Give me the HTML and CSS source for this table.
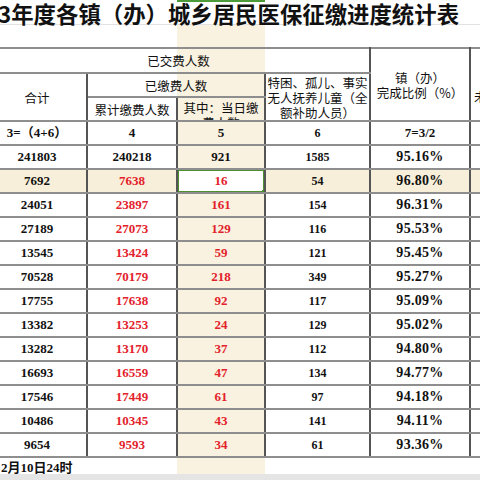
FILE: index.html
```html
<!DOCTYPE html>
<html lang="zh-CN">
<head>
  <meta charset="UTF-8">
  <title>城乡居民医保征缴进度统计表</title>
  <link rel="stylesheet" href="styles.css">
</head>
<body>

<div class="title">3年度各镇（办）城乡居民医保征缴进度统计表</div>

<div class="sheet">
  <table class="grid">
    <colgroup>
      <col class="c-total">
      <col class="c-paid">
      <col class="c-today">
      <col class="c-special">
      <col class="c-rate">
      <col class="c-rest">
    </colgroup>
    <thead>
      <tr class="h1">
        <th colspan="4">已交费人数</th>
        <th rowspan="3" class="rate-head">镇（办）<br>完成比例（%）</th>
        <th rowspan="3" class="cut-head">未缴费人数</th>
      </tr>
      <tr class="h2">
        <th rowspan="2">合计</th>
        <th colspan="2">已缴费人数</th>
        <th rowspan="2" class="special-head">特困、孤儿、事实无人抚养儿童（全额补助人员）</th>
      </tr>
      <tr class="h3">
        <th>累计缴费人数</th>
        <th><div class="clip">其中：当日缴费人数</div></th>
      </tr>
    </thead>
    <tbody>
      <tr class="idx">
        <td>3=（4+6）</td><td>4</td><td>5</td><td class="n4">6</td><td>7=3/2</td><td></td>
      </tr>
      <tr>
        <td>241803</td><td>240218</td><td>921</td><td class="n4">1585</td><td class="pct">95.16%</td><td></td>
      </tr>
      <tr class="hl">
        <td>7692</td><td class="red">7638</td><td class="red sel">16</td><td class="n4">54</td><td class="pct">96.80%</td><td></td>
      </tr>
      <tr>
        <td>24051</td><td class="red">23897</td><td class="red">161</td><td class="n4">154</td><td class="pct">96.31%</td><td></td>
      </tr>
      <tr>
        <td>27189</td><td class="red">27073</td><td class="red">129</td><td class="n4">116</td><td class="pct">95.53%</td><td></td>
      </tr>
      <tr>
        <td>13545</td><td class="red">13424</td><td class="red">59</td><td class="n4">121</td><td class="pct">95.45%</td><td></td>
      </tr>
      <tr>
        <td>70528</td><td class="red">70179</td><td class="red">218</td><td class="n4">349</td><td class="pct">95.27%</td><td></td>
      </tr>
      <tr>
        <td>17755</td><td class="red">17638</td><td class="red">92</td><td class="n4">117</td><td class="pct">95.09%</td><td></td>
      </tr>
      <tr>
        <td>13382</td><td class="red">13253</td><td class="red">24</td><td class="n4">129</td><td class="pct">95.02%</td><td></td>
      </tr>
      <tr>
        <td>13282</td><td class="red">13170</td><td class="red">37</td><td class="n4">112</td><td class="pct">94.80%</td><td></td>
      </tr>
      <tr>
        <td>16693</td><td class="red">16559</td><td class="red">47</td><td class="n4">134</td><td class="pct">94.77%</td><td></td>
      </tr>
      <tr>
        <td>17546</td><td class="red">17449</td><td class="red">61</td><td class="n4">97</td><td class="pct">94.18%</td><td></td>
      </tr>
      <tr>
        <td>10486</td><td class="red">10345</td><td class="red">43</td><td class="n4">141</td><td class="pct">94.11%</td><td></td>
      </tr>
      <tr>
        <td>9654</td><td class="red">9593</td><td class="red">34</td><td class="n4">61</td><td class="pct">93.36%</td><td></td>
      </tr>
    </tbody>
  </table>

  <div class="foot">2月10日24时</div>
</div>

<div class="statusbar"></div>

</body>
</html>
```

FILE: styles.css
```css
html, body {
  margin: 0;
  width: 480px;
  height: 480px;
  overflow: hidden;
  background: #fff;
}

body {
  font-family: "Noto Sans CJK SC", sans-serif;
  color: #111;
}

.title {
  position: relative;
  height: 24px;
  margin-left: -2px;
  border-bottom: 1px solid #e2e2e2;
  font-size: 22.4px;
  font-weight: bold;
  line-height: 26px;
  white-space: nowrap;
}

/* green marker of the selected column header */
.title::before {
  content: "";
  position: absolute;
  top: 0;
  left: 179px;
  width: 88px;
  height: 2px;
  background: #4c9a3a;
}

.sheet {
  height: 449px;
  box-sizing: border-box;
  padding-top: 22px;
  background: linear-gradient(90deg, #fff 177px, #faf2e0 177px, #faf2e0 265px, #fff 265px);
}

.grid {
  border-collapse: collapse;
  table-layout: fixed;
  width: 582px;
  margin-left: -12px;
  border-top: 2px solid #8e8e8e;
}

.c-total { width: 99px; }
.c-paid { width: 90px; }
.c-today { width: 88px; }
.c-special { width: 105px; }
.c-rate { width: 100px; }
.c-rest { width: 100px; }

.grid th,
.grid td {
  padding: 0;
  text-align: center;
  border-right: 2px solid #555;
  border-bottom: 2px solid #8e8e8e;
  overflow: hidden;
}

.grid th {
  font-weight: normal;
  font-size: 12.5px;
  line-height: 15px;
}

.h1 { height: 25px; }
.h2, .h3 { height: 24px; }
.grid tbody tr { height: 24px; }

.rate-head {
  font-size: 12px;
  line-height: 18px;
}

.special-head {
  font-size: 12px;
  line-height: 15.5px;
}

.cut-head {
  text-align: left !important;
  padding: 24px 0 0 3px !important;
  white-space: nowrap;
}

.clip {
  height: 22px;
  overflow: hidden;
  padding-top: 2px;
  box-sizing: border-box;
}

.grid td {
  font-family: "Liberation Serif", "Noto Sans CJK SC", serif;
  font-weight: bold;
  font-size: 13px;
  line-height: 16px;
}

.grid td.n4 { font-size: 12px; }

.grid td.pct {
  font-size: 14px;
  letter-spacing: 0.3px;
}

.red { color: #e3212b; }

.hl td { background: #f8efda; }

.grid td.sel {
  position: relative;
  background: #fff;
}

.grid td.sel::after {
  content: "";
  position: absolute;
  left: -1px;
  top: -1px;
  right: -1px;
  bottom: -1px;
  border: 2px solid #4f8f2f;
}

.grid td.sel::before {
  content: "";
  position: absolute;
  right: -3px;
  bottom: -3px;
  width: 5px;
  height: 5px;
  background: #4f8f2f;
  z-index: 1;
}

.foot {
  padding: 2px 0 0 1px;
  font-family: "Liberation Serif", "Noto Sans CJK SC", serif;
  font-weight: bold;
  font-size: 13px;
  line-height: 16px;
}

.statusbar {
  height: 6px;
  background: #e5e5e5;
}
```
